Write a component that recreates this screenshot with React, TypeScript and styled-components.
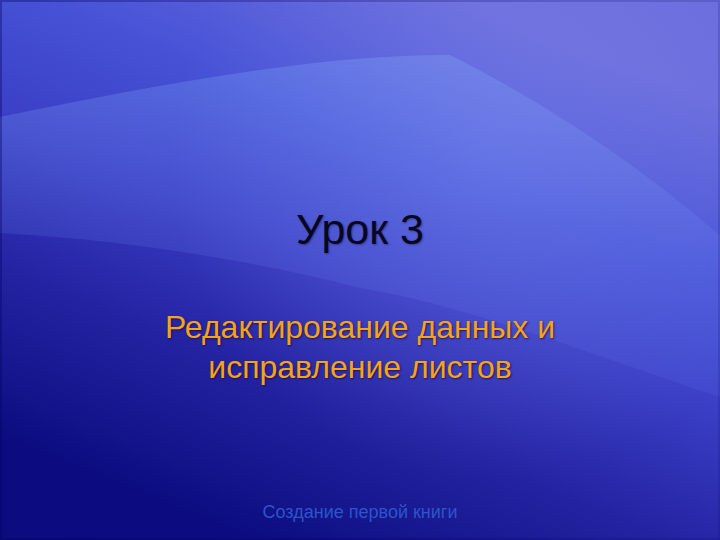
import styled, { createGlobalStyle } from 'styled-components'

const GlobalStyle = createGlobalStyle`
  html, body {
    margin: 0;
    padding: 0;
    background: #0c0c7c;
  }
`

const Slide = styled.div`
  position: relative;
  width: 720px;
  height: 540px;
  overflow: hidden;
  font-family: "Liberation Sans", Arial, sans-serif;
`

const Backdrop = styled.svg`
  position: absolute;
  inset: 0;
  z-index: 0;
`

const Content = styled.div`
  position: relative;
  z-index: 1;
  height: 100%;
  box-sizing: border-box;
  display: flex;
  flex-direction: column;
  align-items: center;
  padding: 204px 40px 17px;
`

const Title = styled.h1`
  margin: 0;
  font-size: 43px;
  line-height: 50px;
  font-weight: 400;
  color: #070720;
  text-shadow: 1px 1px 2px rgba(20, 20, 90, 0.45);
`

const Subtitle = styled.p`
  margin: 53px 0 0;
  font-size: 32px;
  line-height: 40px;
  text-align: center;
  color: #f4a31c;
  text-shadow: 1px 1px 2px rgba(30, 10, 60, 0.75);
`

const Footer = styled.div`
  margin-top: auto;
  font-size: 18px;
  line-height: 22px;
  color: #2b55c8;
`

const SlideBackground = () => (
  <Backdrop width="720" height="540" viewBox="0 0 720 540">
    <defs>
      <linearGradient id="base" x1="250" y1="540" x2="470" y2="0" gradientUnits="userSpaceOnUse">
        <stop offset="0" stopColor="#0c0c80" />
        <stop offset="0.3" stopColor="#2626a6" />
        <stop offset="0.5" stopColor="#3a3ec4" />
        <stop offset="0.72" stopColor="#4652d6" />
        <stop offset="1" stopColor="#6a6cdc" />
      </linearGradient>
      <radialGradient id="glow" cx="490" cy="160" r="320" gradientUnits="userSpaceOnUse">
        <stop offset="0" stopColor="#a8b4ff" stopOpacity="0.2" />
        <stop offset="1" stopColor="#a8b4ff" stopOpacity="0" />
      </radialGradient>
      <linearGradient id="band" x1="0" y1="60" x2="0" y2="400" gradientUnits="userSpaceOnUse">
        <stop offset="0" stopColor="#8ab6ff" stopOpacity="0.26" />
        <stop offset="0.5" stopColor="#7d9cff" stopOpacity="0.14" />
        <stop offset="1" stopColor="#7080ff" stopOpacity="0.12" />
      </linearGradient>
      <linearGradient id="edge" x1="0" y1="0" x2="720" y2="0" gradientUnits="userSpaceOnUse">
        <stop offset="0" stopColor="#000060" stopOpacity="0.35" />
        <stop offset="1" stopColor="#000060" stopOpacity="0.15" />
      </linearGradient>
    </defs>
    <rect width="720" height="540" fill="url(#base)" />
    <rect width="720" height="540" fill="url(#glow)" />
    <path
      d="M0 117 C150 86 320 54 450 55 C540 100 640 165 720 236 L720 397 C620 365 470 305 360 288 C260 262 130 240 0 233 Z"
      fill="url(#band)"
    />
    <rect x="1" y="1" width="718" height="538" fill="none" stroke="url(#edge)" strokeWidth="2" />
  </Backdrop>
)

const App = () => {
  return (
    <>
      <GlobalStyle />
      <Slide>
        <SlideBackground />
        <Content>
          <Title>Урок 3</Title>
          <Subtitle>
            Редактирование данных и
            <br />
            исправление листов
          </Subtitle>
          <Footer>Создание первой книги</Footer>
        </Content>
      </Slide>
    </>
  )
}

export default App
